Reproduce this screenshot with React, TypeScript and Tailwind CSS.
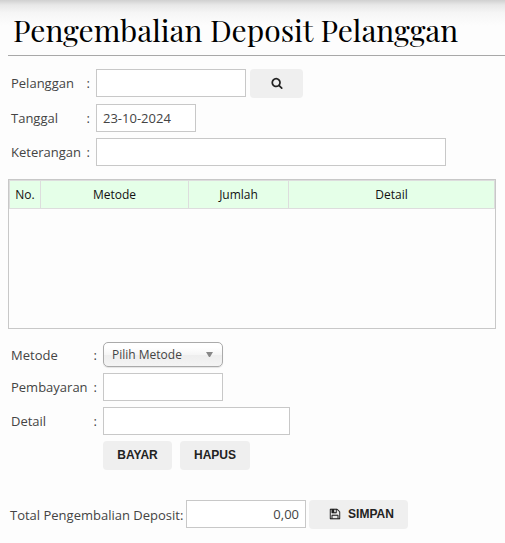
import type { ComponentProps, ReactNode } from 'react';
import { clsx } from 'clsx';

const COLUMNS = [
  { title: 'No.', width: 'w-[31px]' },
  { title: 'Metode', width: 'w-[148px]' },
  { title: 'Jumlah', width: 'w-[100px]' },
  { title: 'Detail', width: 'w-auto' },
];

function TextField({ className, ...props }: ComponentProps<'input'>) {
  return (
    <input
      type="text"
      className={clsx(
        'h-7 min-w-0 border border-[#c8c8c8] bg-white px-[6px] text-[13px] text-[#444] outline-none focus:border-[#888]',
        className,
      )}
      {...props}
    />
  );
}

function Button({ className, ...props }: ComponentProps<'button'>) {
  return (
    <button
      type="button"
      className={clsx(
        'flex h-[29px] items-center justify-center rounded bg-[#efefef] pb-px font-["Liberation_Sans",Arial,sans-serif] text-[12px] font-bold text-[#222] hover:bg-[#e4e4e4]',
        className,
      )}
      {...props}
    />
  );
}

interface FieldRowProps {
  label: string;
  htmlFor: string;
  labelWidth: string;
  children: ReactNode;
}

function FieldRow({ label, htmlFor, labelWidth, children }: FieldRowProps) {
  return (
    <div className="flex items-center">
      <label htmlFor={htmlFor} className={clsx('mr-[6px] flex shrink-0 justify-between', labelWidth)}>
        <span>{label}</span>
        <span>:</span>
      </label>
      {children}
    </div>
  );
}

function SearchIcon() {
  return (
    <svg viewBox="0 0 1792 1792" className="size-[12px]" fill="currentColor" aria-hidden="true">
      <path d="M1216 832q0-185-131.5-316.5t-316.5-131.5-316.5 131.5-131.5 316.5 131.5 316.5 316.5 131.5 316.5-131.5 131.5-316.5zm512 832q0 52-38 90t-90 38q-54 0-90-38l-343-342q-179 124-399 124-143 0-273.5-55.5t-225-150-150-225-55.5-273.5 55.5-273.5 150-225 225-150 273.5-55.5 273.5 55.5 225 150 150 225 55.5 273.5q0 220-124 399l343 343q37 37 37 90z" />
    </svg>
  );
}

function SaveIcon() {
  return (
    <svg
      viewBox="0 0 1792 1792"
      className="size-[12px]"
      fill="currentColor"
      stroke="currentColor"
      strokeWidth="20"
      aria-hidden="true"
    >
      <path d="M512 1536h768v-384h-768v384zm896 0h128v-896q0-14-10-38.5t-20-34.5l-281-281q-10-10-34-20t-39-10v416q0 40-28 68t-68 28h-576q-40 0-68-28t-28-68v-416h-128v1280h128v-416q0-40 28-68t68-28h832q40 0 68 28t28 68v416zm-384-928v-320q0-13-9.5-22.5t-22.5-9.5h-192q-13 0-22.5 9.5t-9.5 22.5v320q0 13 9.5 22.5t22.5 9.5h192q13 0 22.5-9.5t9.5-22.5zm640 32v928q0 40-28 68t-68 28h-1344q-40 0-68-28t-28-68v-1344q0-40 28-68t68-28h928q40 0 88 20t76 48l280 280q28 28 48 76t20 88z" />
    </svg>
  );
}

export default function App() {
  return (
    <main className="min-h-screen bg-[#fdfdfd] bg-[linear-gradient(#d0d0d0,#e8e8e8_5px,#f6f6f6_13px,#fdfdfd_26px)] pb-3 pl-2 font-['Open_Sans',sans-serif] text-[13px] leading-5 text-[#444]">
      <h1 className="border-b border-[#a8a8a8] pt-[10px] pb-[5px] pl-[5px] font-['Playfair_Display','Liberation_Serif',serif] text-[30px] leading-10 whitespace-nowrap text-black">
        Pengembalian Deposit Pelanggan
      </h1>

      <form onSubmit={(e) => e.preventDefault()}>
        {/* Customer */}
        <div className="mt-[13px] flex flex-col gap-[6px] pl-[3px]">
          <div className="flex items-start gap-1">
            <FieldRow label="Pelanggan" htmlFor="pelanggan" labelWidth="w-[79px]">
              <TextField id="pelanggan" className="w-[150px]" />
            </FieldRow>
            <Button className="w-[53px]" aria-label="Cari pelanggan">
              <SearchIcon />
            </Button>
          </div>
          <FieldRow label="Tanggal" htmlFor="tanggal" labelWidth="w-[79px]">
            <TextField id="tanggal" className="w-[100px]" defaultValue="23-10-2024" />
          </FieldRow>
          <FieldRow label="Keterangan" htmlFor="keterangan" labelWidth="w-[79px]">
            <TextField id="keterangan" className="w-[350px]" />
          </FieldRow>
        </div>

        {/* Payments */}
        <div className="mt-[13px] mr-[9px] h-[150px] overflow-y-auto border border-[#c8c8c8]">
          <table className="w-full table-fixed border-collapse text-[12px] text-[#111]">
            <thead>
              <tr className="h-7 bg-[#e5ffe8]">
                {COLUMNS.map(({ title, width }) => (
                  <th key={title} className={clsx('border border-[#ddd] font-normal', width)}>
                    {title}
                  </th>
                ))}
              </tr>
            </thead>
            <tbody />
          </table>
        </div>

        {/* New payment */}
        <div className="mt-[13px] flex flex-col gap-[6px] pl-[3px]">
          <FieldRow label="Metode" htmlFor="metode" labelWidth="w-[86px]">
            <div className="relative">
              <select
                id="metode"
                className="block h-[25px] w-[120px] appearance-none rounded-[5px] border border-[#aaa] bg-[linear-gradient(#fff_20%,#f6f6f6_50%,#eee_52%,#f4f4f4)] pl-2 text-[12px] text-[#444] shadow-[0_1px_1px_rgba(0,0,0,0.1)] outline-none"
              >
                <option>Pilih Metode</option>
              </select>
              <svg
                viewBox="0 0 7 5"
                className="pointer-events-none absolute top-[10px] right-[10px] h-[5px] w-[7px] text-[#888]"
                fill="currentColor"
                aria-hidden="true"
              >
                <path d="M0 0h7L4 5h-1z" />
              </svg>
            </div>
          </FieldRow>
          <FieldRow label="Pembayaran" htmlFor="pembayaran" labelWidth="w-[86px]">
            <TextField id="pembayaran" className="w-[120px]" />
          </FieldRow>
          <FieldRow label="Detail" htmlFor="detail" labelWidth="w-[86px]">
            <TextField id="detail" className="w-[187px]" />
          </FieldRow>
          <div className="flex gap-2 pl-[92px]">
            <Button className="w-[69px]">BAYAR</Button>
            <Button className="w-[70px]">HAPUS</Button>
          </div>
        </div>

        {/* Total */}
        <div className="mt-[30px] flex items-start pl-[2px]">
          <label htmlFor="total" className="w-44 shrink-0 pt-[5px] whitespace-nowrap">
            Total Pengembalian Deposit:
          </label>
          <TextField id="total" className="mr-[3px] w-[120px] text-right" defaultValue="0,00" />
          <Button type="submit" className="w-[99px] gap-[7px] pl-[6px]">
            <SaveIcon />
            SIMPAN
          </Button>
        </div>
      </form>
    </main>
  );
}
